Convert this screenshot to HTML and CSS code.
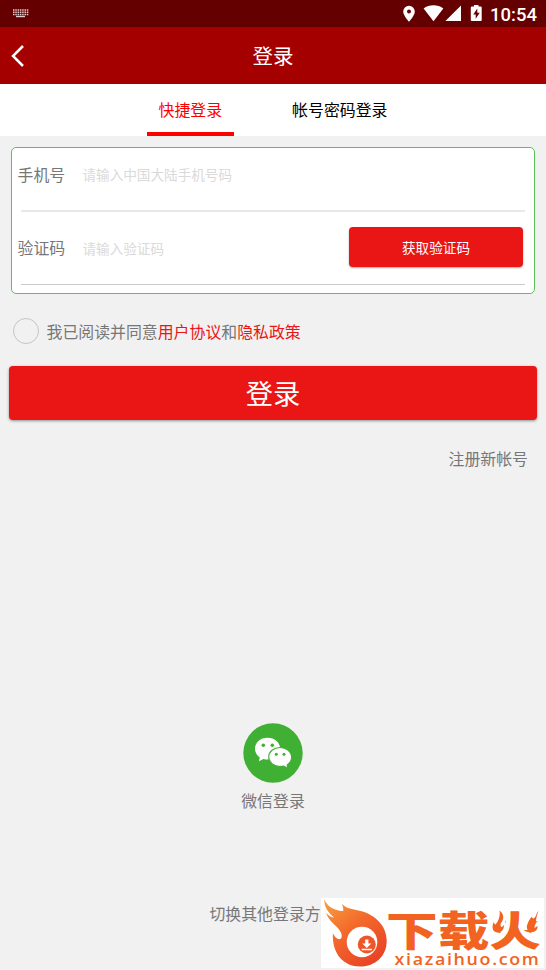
FILE: index.html
```html
<!DOCTYPE html>
<html lang="zh-CN">
<head>
<meta charset="utf-8">
<title>登录</title>
<link rel="stylesheet" href="styles.css">
</head>
<body>
<div class="screen">
  <div class="status">
    <svg class="keyboard" width="16" height="9" viewBox="0 0 16 9"><path d="M0 1h15.500M0 3.300h15.500M0 5.500h15.500" stroke="#e5cccc" stroke-width="1.500" stroke-dasharray="1.500 .8"/><path d="M3 7.500h9" stroke="#e5cccc" stroke-width="1.400"/></svg>
    <svg class="indicators" width="80" height="18" viewBox="402 4 80 18" fill="#fff">
      <path fill-rule="evenodd" d="M409 5.800a5.800 5.800 0 0 0-5.800 5.800c0 4.200 5.800 10.200 5.800 10.200s5.800-6 5.800-10.200A5.800 5.800 0 0 0 409 5.800zm0 3.800a2 2 0 1 1 0 4 2 2 0 0 1 0-4z"/>
      <path d="M423.600 8.600C429 4.200 438 4.200 443.300 8.600L433.500 21.200z"/>
      <path d="M461 5.400V21H445.400z"/>
      <path fill-rule="evenodd" d="M474 4.900h4.500v1.600h2.200q1 0 1 1V20q0 1-1 1h-8.900q-1 0-1-1V7.500q0-1 1-1h2.200zM477.300 8.500l-4 6h2.400v4.300l4-6h-2.400z"/>
    </svg>
    <span class="clock">10:54</span>
  </div>
  <header class="header">
    <svg class="back" width="14" height="22" viewBox="0 0 14 22"><path d="M12 1 2 11l10 10" fill="none" stroke="#fff" stroke-width="2.500"/></svg>
    <h1 class="title">登录</h1>
  </header>
  <nav class="tabs">
    <span class="tab active">快捷登录</span>
    <span class="tab">帐号密码登录</span>
  </nav>
  <main class="main">
    <section class="card">
      <div class="field first">
        <span class="label">手机号</span><span class="hint">请输入中国大陆手机号码</span>
      </div>
      <div class="field second">
        <span class="label">验证码</span><span class="hint code-hint">请输入验证码</span><span class="code-button">获取验证码</span>
      </div>
    </section>
    <div class="agreement"><span class="check"></span><span class="terms">我已阅读并同意<b>用户协议</b>和<b>隐私政策</b></span></div>
    <div class="login">登录</div>
    <div class="register">注册新帐号</div>
    <div class="wechat">
      <svg width="60" height="60" viewBox="0 0 60 60">
        <circle cx="30" cy="30" r="29.700" fill="#40b034"/>
        <path fill="#fff" d="M24.500 14.800C17.400 14.800 12 19.600 12 25.800c0 3.600 1.900 6.700 4.800 8.700L15.900 38.300l4.500-2.400q2 .5 4.100.5C31.600 36.400 37.200 32 37.200 25.800S31.600 14.800 24.500 14.800z"/>
        <path fill="#fff" stroke="#40b034" stroke-width="1.100" d="M37 24.500C30.800 24.500 25.700 28.700 25.700 34s5.100 9.600 11.300 9.600q2 0 3.800-.5l4.300 2.400-1-3.600c2.700-1.800 4.500-4.600 4.500-7.900 0-5.300-5.300-9.500-11.600-9.500z"/>
        <g fill="#40b034"><circle cx="20.300" cy="22.200" r="1.750"/><circle cx="29.300" cy="22.200" r="1.750"/><circle cx="33.300" cy="31.200" r="1.500"/><circle cx="41" cy="31.200" r="1.500"/></g>
      </svg>
      <span>微信登录</span>
    </div>
    <div class="switch">切换其他登录方式</div>
  </main>
  <div class="badge">
    <svg width="223" height="70" viewBox="321 898 223 70">
      <defs><linearGradient id="flame" x1="0" y1="0" x2=".7" y2="1"><stop offset="0" stop-color="#f8a03c"/><stop offset=".5" stop-color="#f3682c"/><stop offset="1" stop-color="#e94325"/></linearGradient></defs>
      <path fill="url(#flame)" d="M324.200 899c2 5.500 6.500 9 11 10.500 4 1.300 7.500 1.800 8 1.500.5-2-.5-5-1.300-7.200 3.500 4 8 5.200 14.500 6.200 17 3 30.300 14.500 30.300 31 0 15-11.500 25.500-26.500 25.500-17 0-28.500-13-27.300-33.500 1.500 4 4.500 6.300 6.500 6.200 3-.5 3-4 .8-8-3.500-6-11-9.200-14.200-18.200 2.500 2.500 5.500 4.500 8 4.600-5-5-9.800-9-9.800-18.600z"/>
      <circle cx="362" cy="942" r="15.300" fill="#fff"/>
      <circle cx="366.800" cy="944.500" r="9" fill="#ee5528"/>
      <path fill="#fff" d="M365.200 939.500h3.200v4h3l-4.600 4.600-4.600-4.600h3zM361.700 948.800h10.200v1.500h-10.200z"/>
      <g fill="#f26322">
        <text class="brand" x="386" y="945.500" textLength="155" lengthAdjust="spacingAndGlyphs">下载火</text>
        <path fill="#fff" d="M491 913h14v19h-14zM525 910h15v20h-15z"/>
        <path d="M499.500 910.500c5 4 4.500 8.500 1.500 12.500-1 2-.5 3.500 1 4l2-2c0 5-3 8-7 7.500-5-.5-5.500-6-3-11 0 2 .5 3 1.500 3 3-3 5-9 4-14zM538.500 911c-3 3-2 6-5 7.500-1-.3-1.500-1-1.500-2-2 2-4 5-5 9-1 4 2 7 5.500 6.500 3.500-.5 5.500-3 5-6l-3 2c0-3 1-5 3.500-7l-2 .5c0-3 1-7 2.500-10.500z"/>
        <text class="domain" x="394.500" y="965" textLength="146" lengthAdjust="spacingAndGlyphs">xiazaihuo.com</text>
      </g>
    </svg>
  </div>
</div>
</body>
</html>
```
FILE: styles.css
```css
* { box-sizing: border-box; }
body {
  margin: 0;
  background: #f1f1f1;
  color: #777;
  font: 15.900px/24px "Noto Sans CJK SC", sans-serif;
}
.screen {
  position: relative;
  display: flex;
  flex-direction: column;
  height: 970px;
  overflow: hidden;
}
.status {
  display: flex;
  align-items: center;
  height: 27px;
  padding: 0 9px 0 13px;
  background: #640000;
}
.indicators { margin: -1px 0 0 auto; }
.clock {
  height: 26px;
  margin-left: 8px;
  color: #fff;
  font: 500 18.500px/28px Roboto, sans-serif;
}
.header {
  display: grid;
  grid-template-columns: 40px 1fr 40px;
  align-items: center;
  height: 57px;
  background: #a50000;
  color: #fff;
}
.back { margin-left: 11px; }
.title {
  margin: -2px 0 0;
  font-size: 20.500px;
  font-weight: 400;
  text-align: center;
}
.tabs {
  display: flex;
  justify-content: center;
  gap: 47px;
  height: 52px;
  background: #fff;
  color: #000;
}
.tab {
  padding: 14px 11.500px 0;
  border-bottom: 4px solid transparent;
}
.active { color: #f00; border-color: #f00; }
.main {
  display: flex;
  flex: 1;
  flex-direction: column;
}
.card {
  height: 147px;
  margin: 11px 11px 0;
  padding: 0 9px;
  border: 1px solid #5fc05a;
  border-radius: 5px;
  background: #fff;
}
.field { display: flex; align-items: center; }
.first { height: 64px; padding-bottom: 10px; border-bottom: 2px solid #e8e8e8; }
.second { height: 73px; padding-bottom: 2px; border-bottom: 1px solid #ccc; }
.label { width: 65px; margin-left: -3.500px; padding-top: 2px; }
.hint { color: #dadada; font-size: 13.600px; }
.code-hint { padding-top: 2px; }
.code-button {
  width: 174px;
  height: 40px;
  margin: 0 2px 0 auto;
  border-radius: 4px;
  background: #ea1515;
  box-shadow: 0 1px 2px #0005;
  color: #fff;
  font-size: 13.600px;
  line-height: 40px;
  text-align: center;
}
.agreement {
  display: flex;
  align-items: center;
  gap: 7.500px;
  height: 26px;
  margin: 24px 0 0 13px;
}
.terms { padding-top: 2px; }
.agreement b { color: #ea1515; font-weight: 400; }
.check {
  width: 26px;
  height: 26px;
  border: 1px solid #c5c5c5;
  border-radius: 50%;
}
.login {
  height: 54px;
  margin: 22px 9px 0;
  border-radius: 4px;
  background: #ea1515;
  box-shadow: 0 1px 3px #0006;
  color: #fff;
  font-size: 27.300px;
  line-height: 52px;
  text-align: center;
}
.register { margin: 27px 18px 0 auto; }
.wechat {
  display: flex;
  flex-direction: column;
  align-items: center;
  gap: 6px;
  margin-top: 252px;
}
.switch { margin-top: 89px; text-align: center; }
.badge {
  position: absolute;
  right: 2px;
  bottom: 2px;
  width: 223px;
  height: 70px;
  background: #fffffff5;
}
.badge svg { display: block; overflow: visible; }
.brand { font: 900 41px "Noto Sans CJK SC", sans-serif; }
.domain { font: 600 16px "Open Sans", sans-serif; letter-spacing: 1.500px; }
```
